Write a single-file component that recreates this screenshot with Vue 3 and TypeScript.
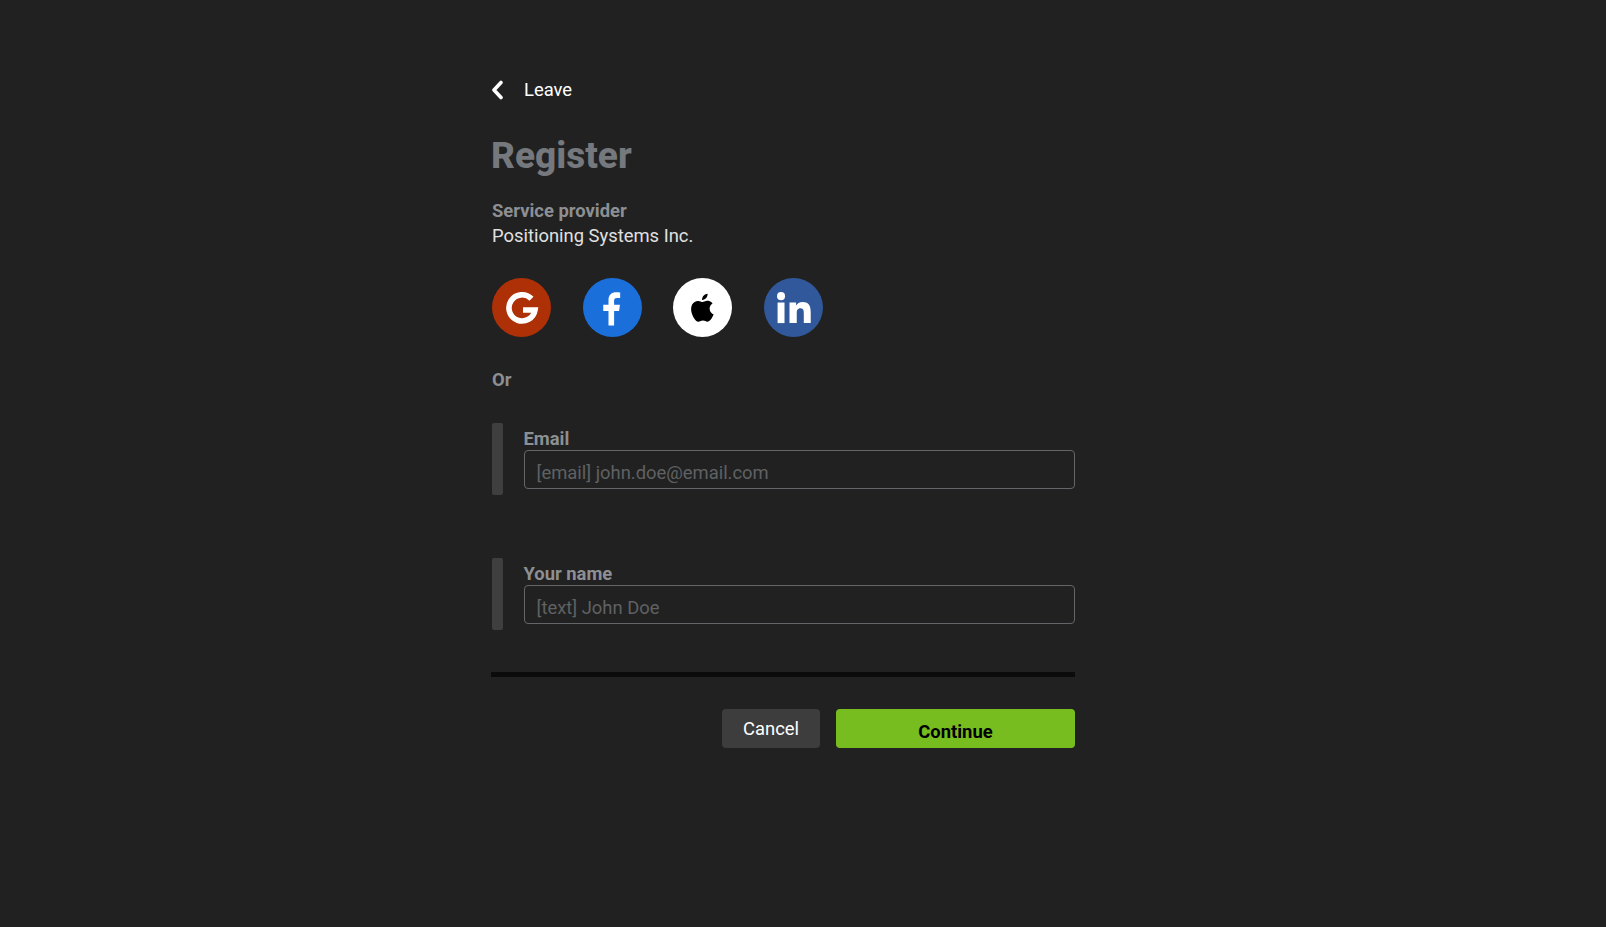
<script setup lang="ts">
type Field = {
	label: string;
	placeholder: string;
};

const fields: Field[] = [
	{ label: 'Email', placeholder: '[email] john.doe@email.com' },
	{ label: 'Your name', placeholder: '[text] John Doe' },
];
</script>

<template>
	<div class="page">
		<main class="panel">
			<a class="leave">
				<svg class="chevron" width="13" height="20" viewBox="0 0 13 20">
					<path d="M10 2.500 L3 10 L10 17.500" fill="none" stroke="#fff" stroke-width="3.600" stroke-linecap="round" stroke-linejoin="round" />
				</svg>
				<span>Leave</span>
			</a>
			<h1 class="title">Register</h1>
			<div class="provider">
				<div class="providerLabel">Service provider</div>
				<div class="providerName">Positioning Systems Inc.</div>
			</div>
			<div class="socials">
				<button class="social google" aria-label="Google">
					<svg width="36" height="36" viewBox="0 0 36 36">
						<path d="M27.500 8.800 A13.100 13.100 0 1 0 31 20 H19" fill="none" stroke="#fff" stroke-width="5.600" />
					</svg>
				</button>
				<button class="social facebook" aria-label="Facebook">
					<svg width="42" height="42" viewBox="0 0 36 36">
						<path d="M15 33V20.500H10.500V15.200H15V11.300C15 6.700 17.700 4.500 21.600 4.500c1.600 0 3 .1 3.400.2v4.800h-2.700c-2 0-2.500 1-2.500 2.500v3.200h5l-.7 5.300h-4.300V33z" fill="#fff" />
					</svg>
				</button>
				<button class="social apple" aria-label="Apple">
					<svg width="35" height="35" viewBox="0 0 24 24">
						<path d="M16.900 12.700c0-2.300 1.900-3.400 2-3.500-1.100-1.600-2.800-1.800-3.400-1.800-1.400-.1-2.800.9-3.500.9-.7 0-1.900-.9-3.100-.8-1.600 0-3.100.9-3.900 2.300-1.700 2.900-.4 7.200 1.200 9.500.8 1.200 1.800 2.400 3 2.400 1.200 0 1.700-.8 3.100-.8 1.500 0 1.900.8 3.100.8 1.300 0 2.100-1.100 2.900-2.300.9-1.300 1.300-2.600 1.300-2.700-.1 0-2.700-1-2.700-4zM14.500 5.500c.6-.8 1.100-1.900 1-3-.9 0-2.100.6-2.800 1.400-.6.700-1.100 1.800-1 2.900 1.100.1 2.100-.5 2.800-1.300z" fill="#000" />
					</svg>
				</button>
				<button class="social linkedin" aria-label="LinkedIn">
					<svg width="39" height="39" viewBox="1 0 36 36">
						<circle cx="7.500" cy="7.500" r="3.700" fill="#fff" />
						<rect x="4.300" y="13.400" width="6.400" height="19" fill="#fff" />
						<path d="M15.300 13.400h6.100v2.700c.9-1.700 3-3.200 6-3.200 6.300 0 7.500 4.100 7.500 9.500v10h-6.400v-8.900c0-2.200 0-4.900-3-4.900s-3.500 2.300-3.500 4.800v9h-6.700z" fill="#fff" />
					</svg>
				</button>
			</div>
			<div class="or">Or</div>
			<div class="fields">
				<div v-for="field in fields" :key="field.label" class="field">
					<div class="marker" />
					<label class="fieldBody">
						<span class="fieldLabel">{{ field.label }}</span>
						<span class="input">{{ field.placeholder }}</span>
					</label>
				</div>
			</div>
			<div class="divider" />
			<div class="actions">
				<button class="btn cancel">Cancel</button>
				<button class="btn continue">Continue</button>
			</div>
		</main>
	</div>
</template>

<style>
html,
body {
	background: #212121;
}
</style>

<style scoped>
.page {
	min-height: 927px;
	box-sizing: border-box;
	background: #212121;
	padding: 79px 0 0 491px;
	font-family: Roboto, 'Liberation Sans', sans-serif;
}
.panel {
	width: 584px;
	display: flex;
	flex-direction: column;
}
.leave {
	display: flex;
	align-items: center;
	height: 22px;
	gap: 20px;
	color: #fff;
	font-size: 18.400px;
	line-height: 22px;
}
.chevron {
	display: block;
}
.title {
	margin: 34px 0 0;
	color: #75787d;
	font-size: 37px;
	font-weight: 800;
	line-height: 42px;
}
.provider {
	margin: 21px 0 0 1px;
	font-size: 18.400px;
	line-height: 25px;
}
.providerLabel {
	color: #8d8f92;
	font-weight: 700;
}
.providerName {
	color: #e0e0e0;
}
.socials {
	display: flex;
	gap: 31.500px;
	margin: 30px 0 0 1px;
}
.social {
	width: 59px;
	height: 59px;
	padding: 0;
	border: 0;
	border-radius: 50%;
	display: flex;
	align-items: center;
	justify-content: center;
}
.google {
	background: #ad3006;
}
.facebook {
	background: #1b6fdb;
}
.apple {
	background: #fff;
}
.linkedin {
	background: #30589a;
}
.or {
	margin: 31px 0 0 1px;
	color: #8d8f92;
	font-size: 18.400px;
	font-weight: 700;
	line-height: 24px;
}
.fields {
	display: flex;
	flex-direction: column;
	gap: 63px;
	margin: 31px 0 0 1px;
}
.field {
	display: flex;
	gap: 20.500px;
	height: 72px;
}
.marker {
	width: 11px;
	height: 72px;
	border-radius: 2px;
	background: #3f3f3f;
}
.fieldBody {
	flex: 1;
	display: flex;
	flex-direction: column;
}
.fieldLabel {
	margin-top: 4px;
	height: 23px;
	color: #8d8f92;
	font-size: 18.400px;
	font-weight: 700;
	line-height: 23px;
}
.input {
	box-sizing: border-box;
	height: 39px;
	padding: 5px 12px 0;
	border: 1px solid #636568;
	border-radius: 4px;
	color: #5f6163;
	font-size: 18.400px;
	line-height: 34px;
}
.divider {
	height: 5px;
	margin-top: 42px;
	background: #0b0b0b;
}
.actions {
	display: flex;
	justify-content: flex-end;
	gap: 16px;
	margin-top: 32px;
}
.btn {
	height: 39px;
	padding: 0;
	border: 0;
	border-radius: 4px;
	font-family: inherit;
	font-size: 18.400px;
}
.cancel {
	width: 98px;
	background: #3d3d3d;
	color: #fff;
}
.continue {
	width: 239px;
	padding-top: 5px;
	background: #78bd1f;
	color: #000;
	font-weight: 700;
}
</style>
